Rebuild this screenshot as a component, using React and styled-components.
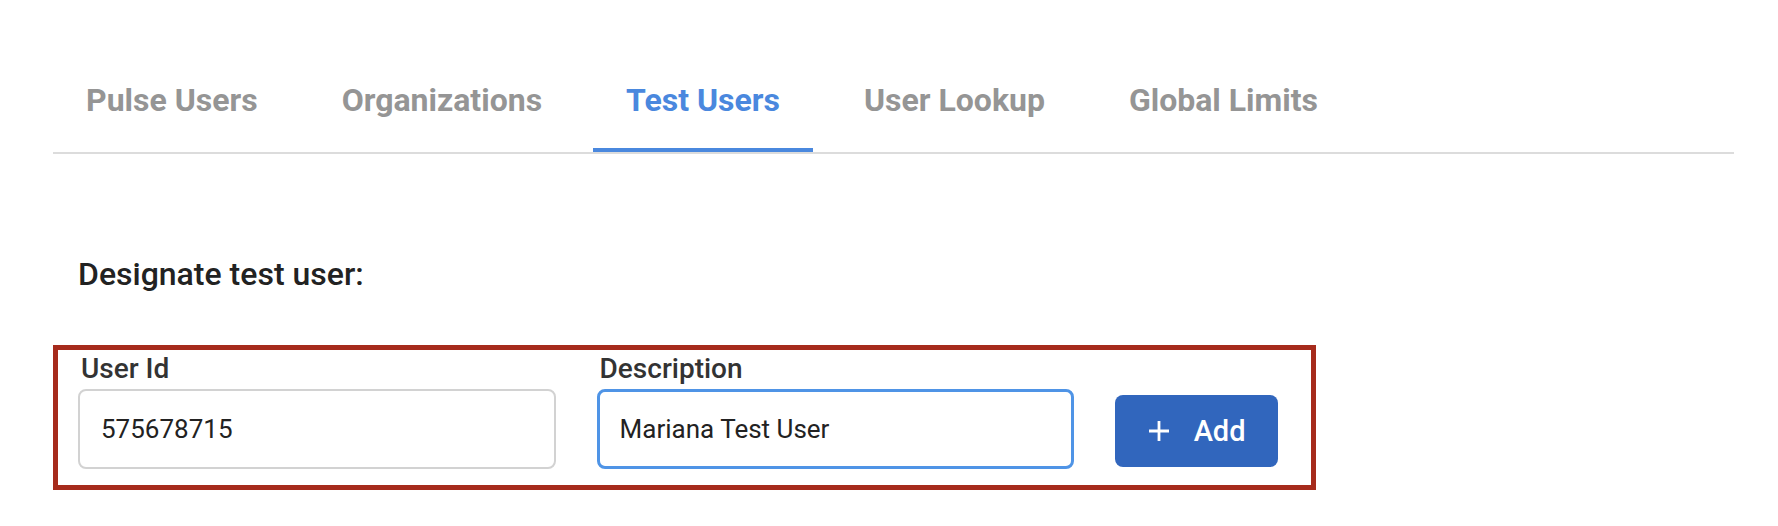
import React, { useState } from "react";
import styled, { createGlobalStyle } from "styled-components";

const GlobalStyle = createGlobalStyle`
  html, body {
    margin: 0;
    padding: 0;
    background: #ffffff;
    font-family: Roboto, "Noto Sans", "Liberation Sans", sans-serif;
  }
  * { box-sizing: border-box; }
`;

const Page = styled.div`
  width: 1778px;
  height: 526px;
  padding: 82px 44px 0 53px;
  display: flex;
  flex-direction: column;
`;

const TabList = styled.div`
  display: flex;
  gap: 18px;
  margin-left: 0;
  border-bottom: 2px solid #dcdcdc;
`;

const Tab = styled.button`
  appearance: none;
  background: none;
  border: none;
  border-bottom: 4px solid ${(p) => (p.$active ? "#4a88de" : "transparent")};
  padding: 0 33px 29px;
  margin: 0;
  font-family: Roboto, "Liberation Sans", sans-serif;
  font-size: 32px;
  line-height: 37px;
  font-weight: 700;
  color: ${(p) => (p.$active ? "#4a88de" : "#959595")};
  cursor: pointer;
`;

const Heading = styled.h2`
  margin: 102px 0 0 25px;
  font-size: 32px;
  line-height: 37px;
  font-weight: 500;
  color: #222222;
`;

const FormBox = styled.div`
  margin-top: 52px;
  width: 1263px;
  border: 5px solid #a62b1c;
  padding: 2px 33px 16px 20px;
  display: flex;
  align-items: flex-end;
  gap: 41px;
`;

const Field = styled.label`
  display: flex;
  flex-direction: column;
  gap: 4px;
  width: 478px;
`;

const Label = styled.span`
  padding-left: 3px;
  font-size: 28px;
  line-height: 33px;
  font-weight: 500;
  color: #333333;
`;

const Input = styled.input`
  height: 80px;
  width: 100%;
  border: ${(p) => (p.$focused ? "3px solid #4f94e6" : "2px solid #d2d2d2")};
  border-radius: 8px;
  padding: 0 ${(p) => (p.$focused ? "20px" : "21px")};
  font-family: Roboto, "Liberation Sans", sans-serif;
  font-size: 26px;
  color: #222222;
  background: #ffffff;
  outline: none;
`;

const AddButton = styled.button`
  appearance: none;
  width: 163px;
  height: 72px;
  margin-bottom: 2px;
  border: none;
  border-radius: 8px;
  background: #3166bd;
  color: #ffffff;
  display: flex;
  align-items: center;
  justify-content: center;
  gap: 24px;
  font-family: Roboto, "Liberation Sans", sans-serif;
  font-size: 29px;
  font-weight: 500;
  cursor: pointer;
  padding: 0;
`;

const PlusIcon = () => (
  <svg width="22" height="22" viewBox="0 0 22 22" aria-hidden="true">
    <path d="M11 1v20M1 11h20" stroke="#ffffff" strokeWidth="2.8" fill="none" />
  </svg>
);

const tabs = ["Pulse Users", "Organizations", "Test Users", "User Lookup", "Global Limits"];

export default function App() {
  const [active, setActive] = useState("Test Users");
  const [userId, setUserId] = useState("575678715");
  const [desc, setDesc] = useState("Mariana Test User");
  return (
    <>
      <GlobalStyle />
      <Page>
        <TabList>
          {tabs.map((t) => (
            <Tab key={t} $active={t === active} onClick={() => setActive(t)}>
              {t}
            </Tab>
          ))}
        </TabList>
        <Heading>Designate test user:</Heading>
        <FormBox>
          <Field>
            <Label>User Id</Label>
            <Input value={userId} onChange={(e) => setUserId(e.target.value)} />
          </Field>
          <Field>
            <Label>Description</Label>
            <Input $focused value={desc} onChange={(e) => setDesc(e.target.value)} />
          </Field>
          <AddButton>
            <PlusIcon />
            <span>Add</span>
          </AddButton>
        </FormBox>
      </Page>
    </>
  );
}
